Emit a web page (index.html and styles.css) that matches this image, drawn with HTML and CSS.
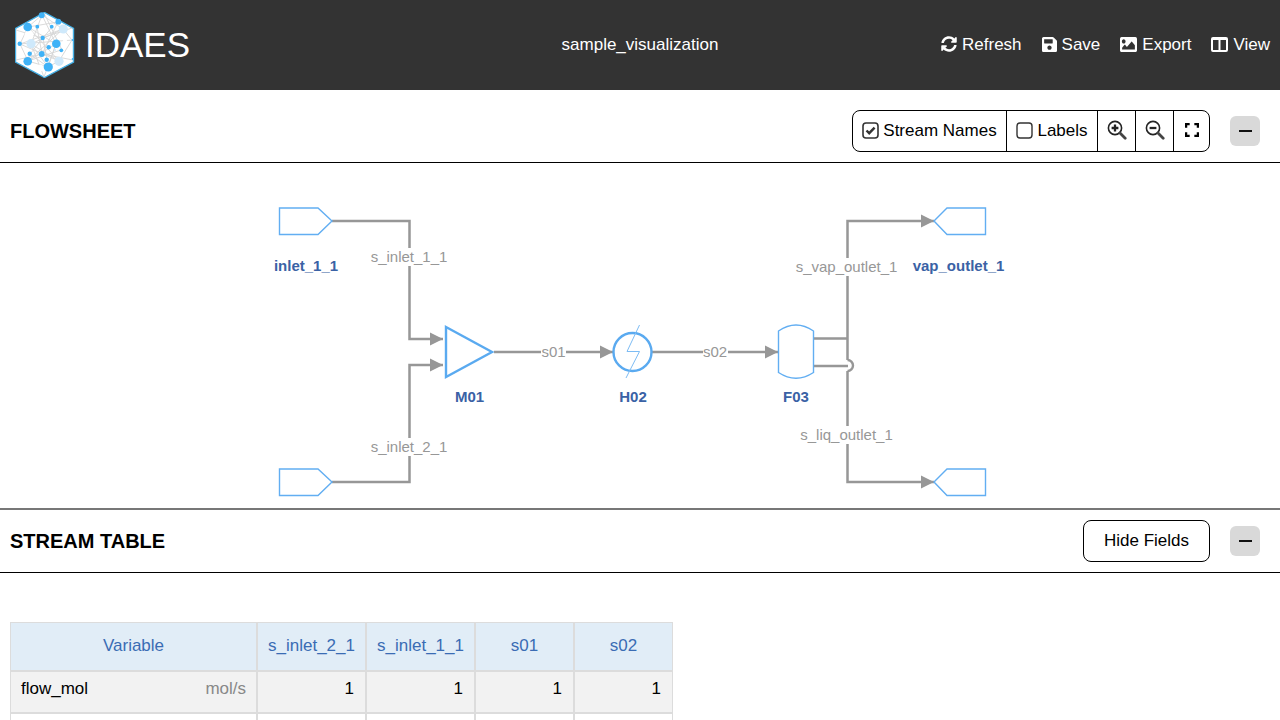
FILE: index.html
```html
<!DOCTYPE html>
<html lang="en">
<head>
    <meta charset="UTF-8" />
    <title>IDAES Flowsheet Visualizer</title>
    <link rel="stylesheet" href="styles.css">
</head>
<body>
    <!-- Top bar -->
    <header class="topbar">
        <div class="brand">
            <svg class="logo" viewBox="15 12 60 66">
                <polygon points="44.5,12.5 73.5,28.5 73.5,62 44.5,77.5 15.5,62 15.5,28.5" fill="#fff" stroke="#45b0e6" stroke-width="1.4"/>
                <g stroke="#d6d6d6" stroke-width="0.9" fill="none">
                    <path d="M42 15 L28 27 L20 44 L28 61 L48 67 L59 61 L72 40 L63 29 L42 15"/>
                    <path d="M42 15 L31 44 L48 67 M42 15 L56 44 L48 67 M28 27 L56 44 L28 61 M63 29 L31 44 L59 61"/>
                    <path d="M20 44 L63 29 M20 44 L59 61 M28 27 L59 61 M28 61 L63 29 M37 27 L42 54 M52 27 L30 54 M43 38 L47 60"/>
                    <path d="M16 30 L42 38 L72 28 M16 60 L42 54 L73 60 M58 22 L42 54 M28 27 L58 22 M28 61 L61 50 M30 54 L48 67 M44 13 L62 50 M44 77 L31 44 M44 77 L56 44 M19 44 L73 40"/>
                </g>
                <g fill="#fff">
                    <circle cx="29" cy="35" r="4.5"/>
                    <circle cx="40" cy="68" r="3.5"/>
                    <circle cx="65" cy="42" r="2.5"/>
                </g>
                <g fill="#cfe9fb">
                    <circle cx="63.3" cy="29" r="4.6"/>
                    <circle cx="31" cy="43.7" r="4.6"/>
                    <circle cx="59" cy="61.3" r="4.6"/>
                    <circle cx="55" cy="50" r="1"/>
                </g>
                <g fill="#3fb2f7">
                    <circle cx="41.7" cy="15.3" r="3"/>
                    <circle cx="27.7" cy="27" r="4.3"/>
                    <circle cx="37.3" cy="26.7" r="1.9"/>
                    <circle cx="51.7" cy="26.7" r="1.9"/>
                    <circle cx="58.3" cy="21.7" r="2.9"/>
                    <circle cx="42.7" cy="38" r="2.2"/>
                    <circle cx="19.7" cy="43.7" r="2.2"/>
                    <circle cx="56.3" cy="43.7" r="4.3"/>
                    <circle cx="48.7" cy="47.3" r="2.2"/>
                    <circle cx="61.3" cy="50.3" r="1.9"/>
                    <circle cx="41.7" cy="54" r="2.9"/>
                    <circle cx="29.7" cy="53.7" r="2.2"/>
                    <circle cx="46.7" cy="59.7" r="2.2"/>
                    <circle cx="27.7" cy="61.3" r="4.3"/>
                    <circle cx="48.3" cy="67" r="4.6"/>
                    <circle cx="72.7" cy="40" r="1"/>
                    <circle cx="72.7" cy="59" r="1"/>
                </g>
            </svg>
            <span class="brand-name">IDAES</span>
        </div>
        <div class="model-name">sample_visualization</div>
        <nav class="topnav">
            <a class="nav-item">
                <svg class="nav-icon nav-icon-refresh" viewBox="0 0 512 512"><path d="M370.72 133.28C339.458 104.008 298.888 87.962 255.848 88c-77.458.068-144.328 53.178-162.791 126.85-1.344 5.363-6.122 9.15-11.651 9.15H24.103c-7.498 0-13.194-6.807-11.807-14.176C33.933 94.924 134.813 8 256 8c66.448 0 126.791 26.136 171.315 68.685L463.03 40.97C478.149 25.851 504 36.559 504 57.941V192c0 13.255-10.745 24-24 24H345.941c-21.382 0-32.09-25.851-16.971-40.971l41.75-41.749zM32 296h134.059c21.382 0 32.09 25.851 16.971 40.971l-41.75 41.75c31.262 29.273 71.835 45.319 114.876 45.28 77.418-.07 144.315-53.144 162.787-126.849 1.344-5.363 6.122-9.15 11.651-9.15h57.304c7.498 0 13.194 6.807 11.807 14.176C478.067 417.076 377.187 504 256 504c-66.448 0-126.791-26.136-171.315-68.685L48.97 471.03C33.851 486.149 8 475.441 8 454.059V320c0-13.255 10.745-24 24-24z"/></svg>
                Refresh
            </a>
            <a class="nav-item">
                <svg class="nav-icon nav-icon-save" viewBox="0 32 448 448"><path d="M433.941 129.941l-83.882-83.882A48 48 0 0 0 316.118 32H48C21.49 32 0 53.49 0 80v352c0 26.51 21.49 48 48 48h352c26.51 0 48-21.49 48-48V163.882a48 48 0 0 0-14.059-33.941zM224 416c-35.346 0-64-28.654-64-64 0-35.346 28.654-64 64-64s64 28.654 64 64c0 35.346-28.654 64-64 64zm96-304.52V212c0 6.627-5.373 12-12 12H76c-6.627 0-12-5.373-12-12V108c0-6.627 5.373-12 12-12h228.52c3.183 0 6.235 1.264 8.485 3.515l3.48 3.48A11.996 11.996 0 0 1 320 111.48z"/></svg>
                Save
            </a>
            <a class="nav-item">
                <svg class="nav-icon nav-icon-wide" viewBox="0 64 512 384" preserveAspectRatio="none"><path d="M464 448H48c-26.51 0-48-21.49-48-48V112c0-26.51 21.49-48 48-48h416c26.51 0 48 21.49 48 48v288c0 26.51-21.49 48-48 48zM112 120c-30.928 0-56 25.072-56 56s25.072 56 56 56 56-25.072 56-56-25.072-56-56-56zM64 384h384V272l-87.515-87.515c-4.686-4.686-12.284-4.686-16.971 0L208 320l-55.515-55.515c-4.686-4.686-12.284-4.686-16.971 0L64 336v48z"/></svg>
                Export
            </a>
            <a class="nav-item">
                <svg class="nav-icon nav-icon-wide" viewBox="0 0 17 15"><path fill-rule="evenodd" d="M2 0H15a2 2 0 0 1 2 2V13a2 2 0 0 1-2 2H2a2 2 0 0 1-2-2V2a2 2 0 0 1 2-2Z M2 3V13H7.5V3Z M9.5 3V13H15V3Z"/></svg>
                View
            </a>
        </nav>
    </header>

    <!-- Flowsheet panel -->
    <section class="panel-head panel-head-flow">
        <h2 class="panel-title">FLOWSHEET</h2>
        <div class="panel-actions">
            <div class="toolbar">
                <button class="tool tool-names">
                    <svg class="check-icon" viewBox="0 0 17 17">
                        <rect x="1" y="1" width="15" height="15" rx="3" fill="none" stroke="#333" stroke-width="1.6"/>
                        <path d="M4.5 8.5 L7.2 11.2 L12.6 5.6" fill="none" stroke="#333" stroke-width="2.4"/>
                    </svg>
                    Stream Names
                </button>
                <button class="tool tool-labels">
                    <svg class="check-icon" viewBox="0 0 17 17">
                        <rect x="1" y="1" width="15" height="15" rx="3" fill="none" stroke="#333" stroke-width="1.4"/>
                    </svg>
                    Labels
                </button>
                <button class="tool tool-icon">
                    <svg class="zoom-icon" viewBox="0 0 20 20">
                        <circle cx="8" cy="8" r="6.6" fill="none" stroke="#222" stroke-width="1.6"/>
                        <path d="M4.6 8 H11.4 M8 4.6 V11.4" stroke="#222" stroke-width="2.3"/>
                        <path d="M13 13 L18.2 18.2" stroke="#444" stroke-width="2.8" stroke-linecap="round"/>
                    </svg>
                </button>
                <button class="tool tool-icon">
                    <svg class="zoom-icon" viewBox="0 0 20 20">
                        <circle cx="8" cy="8" r="6.6" fill="none" stroke="#222" stroke-width="1.6"/>
                        <path d="M4.6 8 H11.4" stroke="#222" stroke-width="2.3"/>
                        <path d="M13 13 L18.2 18.2" stroke="#444" stroke-width="2.8" stroke-linecap="round"/>
                    </svg>
                </button>
                <button class="tool tool-icon tool-last">
                    <svg class="full-icon" viewBox="0 0 15 15">
                        <path d="M1.2 5 V1.2 H5 M10 1.2 H13.8 V5 M13.8 10 V13.8 H10 M5 13.8 H1.2 V10" fill="none" stroke="#000" stroke-width="2.4"/>
                    </svg>
                </button>
            </div>
            <button class="collapse-btn"><span class="collapse-bar"></span></button>
        </div>
    </section>

    <!-- The diagram keeps the page coordinates of its nodes -->
    <svg class="diagram" viewBox="0 163 1280 345">
        <defs>
            <marker id="head" markerUnits="userSpaceOnUse" markerWidth="13" markerHeight="14" refX="13" refY="7" orient="auto">
                <path d="M0 0.5 L13 7 L0 13.5 Z" fill="#979797"/>
            </marker>
        </defs>

        <g class="stream">
            <path d="M332 221 H409.5 V339 H443" marker-end="url(#head)"/>
            <path d="M332 482 H409.5 V365 H443" marker-end="url(#head)"/>
            <path d="M494 352 H613" marker-end="url(#head)"/>
            <path d="M652 352 H778" marker-end="url(#head)"/>
            <path d="M814 338.5 H847.5 M847.5 360 V221 H934" marker-end="url(#head)"/>
            <path d="M814 366 H848"/>
            <path class="hop" d="M847.5 360 A5.5 5.5 0 0 1 847.5 371"/>
            <path d="M847.5 371 V482 H934" marker-end="url(#head)"/>
        </g>

        <g class="unit-thin">
            <polygon points="279.5,208 318,208 332,221 318,234.5 279.5,234.5"/>
            <polygon points="279.5,469 318,469 332,482 318,495.5 279.5,495.5"/>
            <polygon points="934,221 947,208 985.5,208 985.5,234.5 947,234.5"/>
            <polygon points="934,482 947,469 985.5,469 985.5,495.5 947,495.5"/>
            <path d="M778.5 331 Q796 319 813.5 331 V372.5 Q796 384 778.5 372.5 Z"/>
        </g>
        <g class="unit-thick">
            <polygon points="446,327 492,352 446,377"/>
            <circle cx="632.5" cy="352" r="19"/>
        </g>
        <path class="bolt" d="M639.5 325 L627 351.5 H639.5 L626 378"/>

        <g class="stream-name">
            <rect x="369" y="248" width="81" height="18"/>
            <text x="409" y="262">s_inlet_1_1</text>
            <rect x="369" y="438" width="81" height="18"/>
            <text x="409" y="452">s_inlet_2_1</text>
            <rect x="541" y="343" width="25" height="18"/>
            <text x="553.5" y="357">s01</text>
            <rect x="703" y="343" width="25" height="18"/>
            <text x="715" y="357">s02</text>
            <rect x="794" y="258" width="106" height="18"/>
            <text x="846.5" y="272">s_vap_outlet_1</text>
            <rect x="799" y="426" width="97" height="18"/>
            <text x="846.5" y="440">s_liq_outlet_1</text>
        </g>

        <g class="unit-name">
            <text x="306" y="271">inlet_1_1</text>
            <text x="958.5" y="271">vap_outlet_1</text>
            <text x="469.5" y="402">M01</text>
            <text x="633" y="402">H02</text>
            <text x="796" y="402">F03</text>
        </g>
    </svg>

    <!-- Stream table panel -->
    <section class="panel-head panel-head-table">
        <h2 class="panel-title">STREAM TABLE</h2>
        <div class="panel-actions">
            <button class="hide-btn">Hide Fields</button>
            <button class="collapse-btn"><span class="collapse-bar"></span></button>
        </div>
    </section>

    <table class="stream-table">
        <colgroup>
            <col class="col-var">
            <col class="col-wide">
            <col class="col-wide">
            <col class="col-small">
            <col class="col-small">
        </colgroup>
        <thead>
            <tr>
                <th>Variable</th>
                <th>s_inlet_2_1</th>
                <th>s_inlet_1_1</th>
                <th>s01</th>
                <th>s02</th>
            </tr>
        </thead>
        <tbody>
            <tr class="row-odd">
                <td class="var-td"><div class="var-cell"><span>flow_mol</span><span class="unit">mol/s</span></div></td>
                <td>1</td>
                <td>1</td>
                <td>1</td>
                <td>1</td>
            </tr>
            <tr class="row-even">
                <td></td>
                <td></td>
                <td></td>
                <td></td>
                <td></td>
            </tr>
        </tbody>
    </table>
</body>
</html>
```

FILE: styles.css
```css
html, body {
    height: 100%;
    margin: 0;
    padding: 0;
    overflow: hidden;
}
body {
    font-family: "Liberation Sans", Arial, sans-serif;
    font-size: 17px;
    color: #000;
    background: #fff;
}
button {
    font-family: inherit;
    font-size: 17px;
    color: #000;
    background: #fff;
    padding: 0;
    margin: 0;
    border: none;
}

/* Top bar */
.topbar {
    height: 90px;
    background: #333;
    color: #fff;
    display: grid;
    grid-template-columns: 1fr auto 1fr;
    align-items: center;
}
.brand {
    display: flex;
    align-items: center;
    padding-left: 15px;
}
.logo {
    width: 60px;
    height: 66px;
    display: block;
}
.brand-name {
    font-size: 35px;
    margin-left: 10px;
}
.topnav {
    display: flex;
    justify-content: flex-end;
    gap: 20px;
    padding-right: 10px;
}
.nav-item {
    display: flex;
    align-items: center;
    gap: 5px;
}
.nav-icon {
    width: 17px;
    height: 15px;
    fill: #fff;
    display: block;
    margin-bottom: 2px;
}
.nav-icon-refresh {
    width: 16px;
    height: 16px;
    margin-bottom: 3px;
}
.nav-icon-save {
    width: 15px;
}

/* Panel headers */
.panel-head {
    height: 72px;
    box-sizing: content-box;
    border-bottom: 1px solid #000;
    display: flex;
    align-items: center;
    justify-content: space-between;
    padding: 0 20px 0 10px;
}
.panel-head-flow {
    height: 62px;
    padding-top: 10px;
}
.panel-head-table {
    height: 62px;
    border-top: 2px solid #777;
}
.panel-title {
    margin: 0;
    font-size: 20px;
    font-weight: bold;
}
.panel-actions {
    display: flex;
    align-items: center;
    gap: 20px;
}
.collapse-btn {
    width: 30px;
    height: 30px;
    border-radius: 6px;
    background: #d9d9d9;
    display: flex;
    align-items: center;
    justify-content: center;
}
.collapse-bar {
    width: 13px;
    height: 2px;
    background: #111;
    display: block;
}
.hide-btn {
    width: 127px;
    height: 42px;
    border: 1px solid #000;
    border-radius: 8px;
}

/* Flowsheet toolbar */
.toolbar {
    display: flex;
    height: 42px;
    box-sizing: border-box;
    border: 1px solid #000;
    border-radius: 8px;
}
.tool {
    height: 40px;
    background: transparent;
    border-right: 1px solid #000;
    display: flex;
    align-items: center;
    justify-content: center;
    gap: 4px;
    box-sizing: content-box;
}
.tool-names {
    width: 153px;
}
.tool-labels {
    width: 90px;
}
.tool-icon {
    width: 37px;
}
.tool-last {
    width: 35px;
    border-right: none;
}
.check-icon {
    width: 17px;
    height: 17px;
    display: block;
    margin-bottom: 2px;
}
.zoom-icon {
    width: 20px;
    height: 20px;
    display: block;
    margin-bottom: 3px;
}
.full-icon {
    width: 14px;
    height: 14px;
    display: block;
    margin-bottom: 3px;
}

/* Diagram */
.diagram {
    display: block;
    width: 1280px;
    height: 345px;
}
.stream path {
    fill: none;
    stroke: #979797;
    stroke-width: 2.5;
}
.stream .hop {
    stroke-width: 2.4;
}
.unit-thin polygon, .unit-thin path {
    fill: #fff;
    stroke: #62aef2;
    stroke-width: 1.4;
}
.unit-thick polygon, .unit-thick circle {
    fill: #fff;
    stroke: #5aaaf0;
    stroke-width: 2.4;
}
.bolt {
    fill: none;
    stroke: #7dbcf4;
    stroke-width: 1;
}
.stream-name rect {
    fill: #fff;
}
.stream-name text {
    font-size: 15px;
    fill: #979797;
    text-anchor: middle;
}
.unit-name text {
    font-size: 15px;
    font-weight: bold;
    fill: #3a62a5;
    text-anchor: middle;
}

/* Stream table */
.stream-table {
    margin: 49px 0 0 10px;
    border-collapse: separate;
    border-spacing: 0;
    table-layout: fixed;
    width: 663px;
}
.col-var {
    width: 247px;
}
.col-wide {
    width: 109px;
}
.col-small {
    width: 99px;
}
.stream-table th, .stream-table td {
    border: 1px solid #dcdcdc;
    box-sizing: border-box;
}
.stream-table th {
    height: 49px;
    background: #e1edf7;
    color: #3a6cb4;
    font-weight: normal;
    padding: 0 0 2px;
}
.stream-table td {
    height: 42px;
    padding: 0 11px 6px 10px;
    text-align: right;
}
.stream-table .var-td {
    padding-right: 10px;
}
.row-odd td {
    background: #f2f2f2;
}
.row-even td {
    background: #fff;
}
.var-cell {
    display: flex;
    justify-content: space-between;
}
.unit {
    color: #888;
}
```
